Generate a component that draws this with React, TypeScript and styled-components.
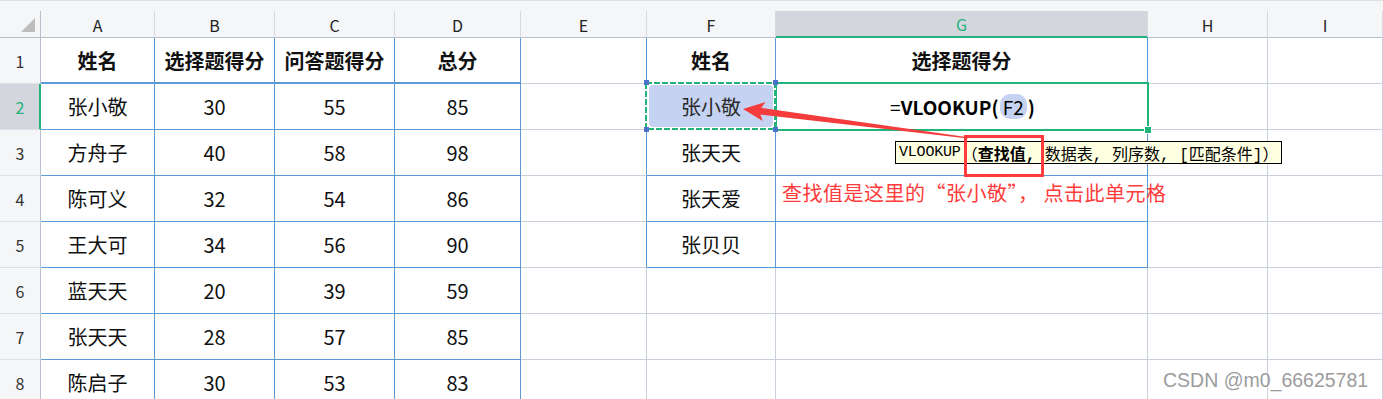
import React from 'react'
import styled, { createGlobalStyle } from 'styled-components'

const GREEN = '#20b47a'
const BLUE = '#5b9bd5'
const GRID = '#c9cfdb'
const HEAD_BG = '#f5f6f8'
const HEAD_SEL = '#d3d6dd'
const RED = '#ff3b3b'

const COLS = [41, 114, 120, 120, 126, 126, 129, 372, 120, 115]
const LETTERS = ['A', 'B', 'C', 'D', 'E', 'F', 'G', 'H', 'I']

const data: string[][] = [
	['姓名', '选择题得分', '问答题得分', '总分', '', '姓名', '选择题得分', '', ''],
	['张小敬', '30', '55', '85', '', '张小敬', '', '', ''],
	['方舟子', '40', '58', '98', '', '张天天', '', '', ''],
	['陈可义', '32', '54', '86', '', '张天爱', '', '', ''],
	['王大可', '34', '56', '90', '', '张贝贝', '', '', ''],
	['蓝天天', '20', '39', '59', '', '', '', '', ''],
	['张天天', '28', '57', '85', '', '', '', '', ''],
	['陈启子', '30', '53', '83', '', '', '', '', ''],
]

// A1:D8 and F1:G5 carry the blue table borders
const inTable = (r: number, c: number) =>
	(r >= 1 && r <= 8 && c >= 1 && c <= 4) ||
	(r >= 1 && r <= 5 && (c === 6 || c === 7))

const GlobalStyle = createGlobalStyle`
	html, body {
		margin: 0;
		padding: 0;
		background: #ffffff;
		overflow: hidden;
	}
	body {
		font-family: "Noto Sans CJK SC", "Noto Sans", sans-serif;
	}
`

const Sheet = styled.div`
	position: relative;
	width: 1383px;
	height: 399px;
	overflow: hidden;
	background: #fff;
`

const TopStrip = styled.div`
	height: 10px;
	background: ${HEAD_BG};
	border-top: 1px solid #dcdfe5;
`

const Grid = styled.div`
	display: grid;
	grid-template-columns: ${COLS.map((w) => `${w}px`).join(' ')};
	grid-template-rows: 27px repeat(8, 46px);
`

const Corner = styled.div`
	background: ${HEAD_BG};
	border-right: 1px solid #b9c0cd;
	border-bottom: 1px solid #b9c0cd;
	box-sizing: border-box;
	display: flex;
	align-items: flex-end;
	justify-content: flex-end;
	padding: 0 5px 5px 0;
`

const ColHead = styled.div<{ $active?: boolean }>`
	box-sizing: border-box;
	display: flex;
	align-items: center;
	justify-content: center;
	font-size: 16px;
	color: ${({ $active }) => ($active ? GREEN : '#222')};
	background: ${({ $active }) => ($active ? HEAD_SEL : HEAD_BG)};
	border-right: 1px solid #d6d9df;
	border-bottom: ${({ $active }) =>
		$active ? `2px solid ${GREEN}` : '1px solid #b9c0cd'};
	padding-top: 1px;
`

const RowHead = styled.div<{ $active?: boolean }>`
	box-sizing: border-box;
	display: flex;
	align-items: center;
	justify-content: center;
	font-size: 16px;
	color: ${({ $active }) => ($active ? GREEN : '#333')};
	background: ${({ $active }) => ($active ? HEAD_SEL : HEAD_BG)};
	border-right: ${({ $active }) =>
		$active ? `2px solid ${GREEN}` : '1px solid #b9c0cd'};
	border-bottom: 1px solid #dde1e7;
	padding-left: ${({ $active }) => ($active ? '1px' : '0')};
`

const Cell = styled.div<{ $right: string; $bottom: string; $bw: number; $bold?: boolean }>`
	position: relative;
	box-sizing: border-box;
	display: flex;
	align-items: center;
	justify-content: center;
	font-size: 20px;
	font-weight: ${({ $bold }) => ($bold ? 700 : 400)};
	color: #111;
	white-space: nowrap;
	border-right: 1px solid ${({ $right }) => $right};
	border-bottom: ${({ $bw }) => $bw}px solid ${({ $bottom }) => $bottom};
`

const SelFill = styled.div`
	flex: 1;
	align-self: stretch;
	margin: 1px 2px 2px 2px;
	display: flex;
	align-items: center;
	justify-content: center;
	background: #c6d2f1;
	border-radius: 4px;
	color: #2a2a2a;
`

const Ants = styled.svg`
	position: absolute;
	left: -4px;
	top: -4px;
	z-index: 3;
	overflow: visible;
`

const ActiveBorder = styled.div`
	position: absolute;
	left: -1px;
	top: -2px;
	width: 374px;
	height: 49px;
	box-sizing: border-box;
	border: 2px solid ${GREEN};
	z-index: 2;
	pointer-events: none;
`

const FillHandle = styled.span`
	position: absolute;
	right: -5px;
	bottom: -5px;
	width: 6px;
	height: 6px;
	background: ${GREEN};
	border: 1px solid #fff;
`

const Formula = styled.div`
	display: flex;
	align-items: center;
	font-size: 19px;
	color: #000;
	padding-left: 2px;
`

const Bold = styled.span`
	font-weight: 700;
`

const RefPill = styled.span`
	background: #c6d2f1;
	border-radius: 10px;
	padding: 0 3px;
	margin: 0 1px;
	line-height: 25px;
`

const Tooltip = styled.div`
	position: absolute;
	left: 895px;
	top: 141px;
	height: 23px;
	box-sizing: border-box;
	padding: 0 3px;
	display: flex;
	align-items: center;
	background: #ffffe1;
	border: 1px solid #000;
	color: #000;
	white-space: nowrap;
	z-index: 5;
`

const TipName = styled.span`
	font-family: "Liberation Mono", monospace;
	font-size: 15px;
	letter-spacing: -0.2px;
	margin-right: 1px;
`

const TipArgs = styled.span`
	font-family: "Liberation Mono", "Noto Sans CJK SC", monospace;
	font-size: 16px;
`

const RedBox = styled.div`
	position: absolute;
	left: 964px;
	top: 135px;
	width: 80px;
	height: 42px;
	box-sizing: border-box;
	border: 3px solid ${RED};
	z-index: 6;
`

const Arrow = styled.svg`
	position: absolute;
	left: 0;
	top: 0;
	z-index: 7;
	pointer-events: none;
`

const Note = styled.div`
	position: absolute;
	left: 782px;
	top: 180px;
	font-size: 20px;
	line-height: 26px;
	letter-spacing: 0.5px;
	color: ${RED};
	white-space: pre;
	z-index: 5;
`

const Watermark = styled.div`
	position: absolute;
	left: 1163px;
	top: 367px;
	font-family: "Liberation Sans", Arial, sans-serif;
	font-size: 19.5px;
	line-height: 26px;
	color: #9c9c9c;
	text-shadow: 0 0 1px #fff;
	white-space: nowrap;
	z-index: 8;
`

const Marquee = () => (
	<Ants width="137" height="54">
		<rect x="3" y="3" width="129" height="46" fill="none" stroke="#fff" strokeWidth="2" />
		<rect
			x="3"
			y="3"
			width="129"
			height="46"
			fill="none"
			stroke={GREEN}
			strokeWidth="2"
			strokeDasharray="6 2"
		/>
		<rect x="1" y="0" width="5" height="5" fill="#4a74cc" />
		<rect x="130" y="0" width="5" height="5" fill="#4a74cc" />
		<rect x="1" y="47" width="5" height="5" fill="#4a74cc" />
		<rect x="130" y="47" width="5" height="5" fill="#4a74cc" />
	</Ants>
)

export default function App() {
	return (
		<>
			<GlobalStyle />
			<Sheet>
				<TopStrip />
				<Grid>
					<Corner>
						<svg width="14" height="14" viewBox="0 0 14 14">
							<polygon points="14,0 14,14 0,14" fill="#bdbdbd" />
						</svg>
					</Corner>
					{LETTERS.map((l, i) => (
						<ColHead key={l} $active={i === 6}>
							{l}
						</ColHead>
					))}
					{data.map((row, ri) => {
						const r = ri + 1
						return (
							<React.Fragment key={r}>
								<RowHead $active={r === 2}>{r}</RowHead>
								{row.map((val, ci) => {
									const c = ci + 1
									const right =
										inTable(r, c) || inTable(r, c + 1) ? BLUE : GRID
									const bottom =
										inTable(r, c) || inTable(r + 1, c) ? BLUE : GRID
									const bw = r === 1 && c <= 4 ? 2 : 1
									if (r === 2 && c === 6) {
										return (
											<Cell key={c} $right={right} $bottom={bottom} $bw={bw}>
												<SelFill>{val}</SelFill>
												<Marquee />
											</Cell>
										)
									}
									if (r === 2 && c === 7) {
										return (
											<Cell key={c} $right={right} $bottom={bottom} $bw={bw}>
												<Formula>
													=<Bold>VLOOKUP(</Bold>
													<RefPill>F2</RefPill>
													<Bold>)</Bold>
												</Formula>
												<ActiveBorder>
													<FillHandle />
												</ActiveBorder>
											</Cell>
										)
									}
									return (
										<Cell key={c} $right={right} $bottom={bottom} $bw={bw} $bold={r === 1}>
											{val}
										</Cell>
									)
								})}
							</React.Fragment>
						)
					})}
				</Grid>

				<Tooltip>
					<TipName>VLOOKUP</TipName>
					<TipArgs>
						（<Bold>查找值,</Bold> 数据表, 列序数, [匹配条件]）
					</TipArgs>
				</Tooltip>
				<RedBox />
				<Arrow width="1383" height="399" viewBox="0 0 1383 399">
					<polygon
						points="743,109 765.5,102 761.2,107.9 968,137.2 968,138.5 760.4,114.5 762.8,121"
						fill="#f43c3c"
					/>
				</Arrow>
				<Note>查找值是这里的“张小敬”， 点击此单元格</Note>
				<Watermark>CSDN @m0_66625781</Watermark>
			</Sheet>
		</>
	)
}
